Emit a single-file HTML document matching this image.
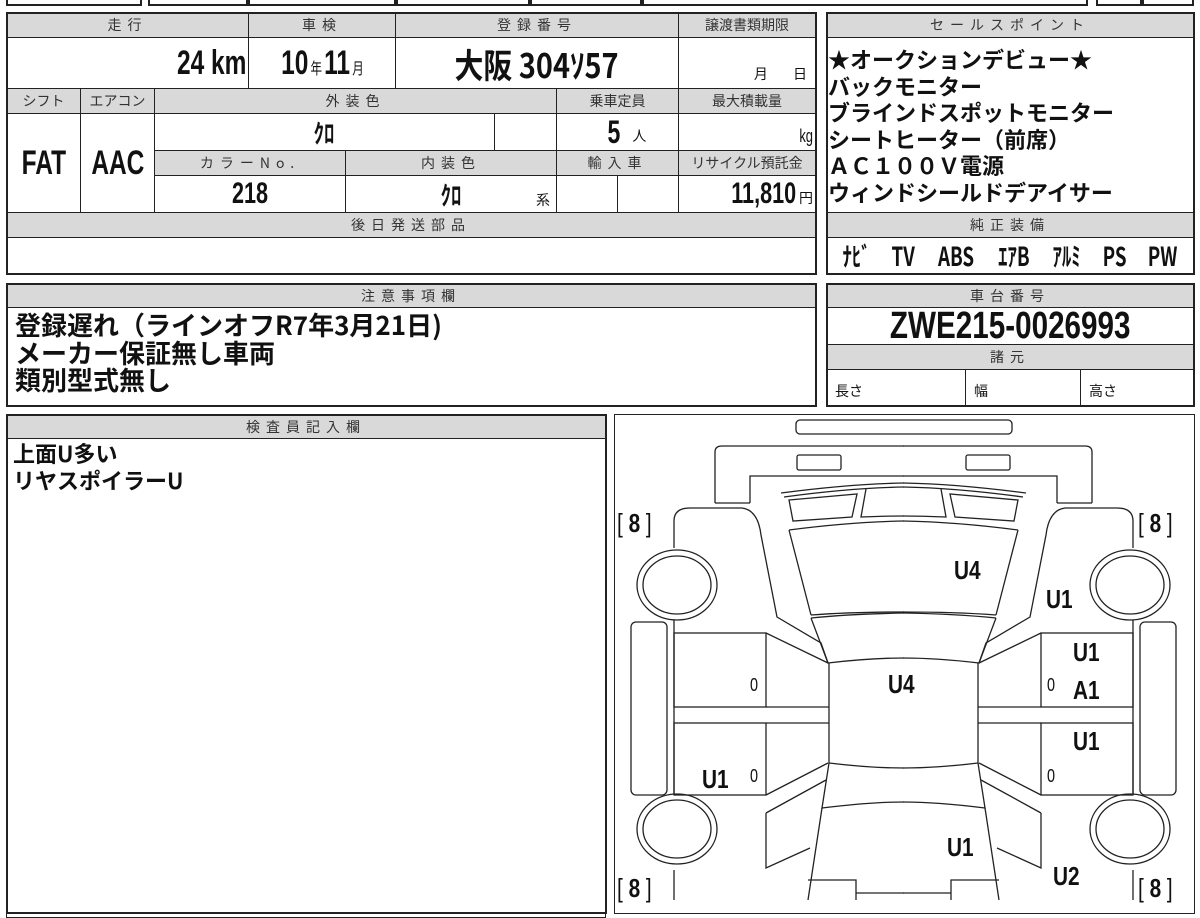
<!DOCTYPE html>
<html><head><meta charset="utf-8"><style>
*{margin:0;padding:0;box-sizing:border-box}
body{width:1200px;height:900px;background:#fff;position:relative;overflow:hidden;font-family:"Liberation Sans","Noto Sans CJK JP",sans-serif;color:#111}
.c{position:absolute;border:1px solid #222;display:flex;align-items:center;justify-content:center;white-space:nowrap}
.h{background:#d9d9d9;font-family:"Noto Sans CJK JP",sans-serif;font-size:14px;letter-spacing:6px;color:#333}
.o{position:absolute;border:2px solid #222}
.b{font-weight:bold}
.t{position:absolute;white-space:nowrap;font-weight:bold;display:inline-block;transform:scaleX(.8);transform-origin:left}
.n{display:inline-block;transform:scaleX(.72);font-weight:bold}
.jp{font-family:"Noto Sans CJK JP",sans-serif}
</style></head><body>
<div class="c" style="left:6px;top:-10px;width:136px;height:16px;border-width:2px"></div>
<div class="c" style="left:148px;top:-10px;width:100px;height:16px;border-width:2px"></div>
<div class="c" style="left:248px;top:-10px;width:148px;height:16px;border-width:2px"></div>
<div class="c" style="left:396px;top:-10px;width:134px;height:16px;border-width:2px"></div>
<div class="c" style="left:530px;top:-10px;width:112px;height:16px;border-width:2px"></div>
<div class="c" style="left:642px;top:-10px;width:446px;height:16px;border-width:2px"></div>
<div class="c" style="left:1096px;top:-10px;width:46px;height:16px;border-width:2px"></div>
<div class="c" style="left:1142px;top:-10px;width:52px;height:16px;border-width:2px"></div>

<div class="c h" style="left:6px;top:12px;width:243px;height:26px">走行</div>
<div class="c h" style="left:248px;top:12px;width:148px;height:26px">車検</div>
<div class="c h" style="left:395px;top:12px;width:284px;height:26px">登録番号</div>
<div class="c h" style="left:678px;top:12px;width:138px;height:26px;letter-spacing:0">譲渡書類期限</div>
<div class="c" style="left:6px;top:37px;width:243px;height:52px;justify-content:flex-end;padding-right:2px"><span class="n" style="font-size:34px;transform-origin:right">24 km</span></div>
<div class="c" style="left:248px;top:37px;width:148px;height:52px"><span class="n" style="font-size:34px">10<span class="jp" style="font-size:16px;font-weight:normal;margin:0 3px">年</span>11<span class="jp" style="font-size:16px;font-weight:normal;margin-left:3px">月</span></span></div>
<div class="c" style="left:395px;top:37px;width:284px;height:52px"><span class="n jp" style="font-size:34px;transform:scaleX(.85)">大阪 304ｿ57</span></div>
<div class="c jp" style="left:678px;top:37px;width:138px;height:52px;font-size:14px;align-items:flex-end;padding-bottom:4px;justify-content:flex-end;padding-right:8px">月&nbsp;&nbsp;&nbsp;&nbsp;&nbsp;&nbsp;&nbsp;&nbsp;日</div>
<div class="c h" style="left:6px;top:88px;width:75px;height:26px;letter-spacing:0">シフト</div>
<div class="c h" style="left:80px;top:88px;width:75px;height:26px;letter-spacing:0">エアコン</div>
<div class="c h" style="left:154px;top:88px;width:403px;height:26px">外装色</div>
<div class="c h" style="left:556px;top:88px;width:123px;height:26px;letter-spacing:0">乗車定員</div>
<div class="c h" style="left:678px;top:88px;width:138px;height:26px;letter-spacing:0">最大積載量</div>
<div class="c" style="left:6px;top:113px;width:75px;height:100px"><span class="n" style="font-size:34px">FAT</span></div>
<div class="c" style="left:80px;top:113px;width:75px;height:100px"><span class="n" style="font-size:34px">AAC</span></div>
<div class="c" style="left:154px;top:113px;width:341px;height:38px"><span class="n jp" style="font-size:26px;transform:scaleX(.8)">ｸﾛ</span></div>
<div class="c" style="left:494px;top:113px;width:63px;height:38px"></div>
<div class="c" style="left:556px;top:113px;width:123px;height:38px;padding-left:16px"><span class="n" style="font-size:32px">5</span><span class="jp" style="font-size:14px;margin:8px 0 0 10px">人</span></div>
<div class="c" style="left:678px;top:113px;width:138px;height:38px;justify-content:flex-end;padding:8px 2px 0 0;font-size:18px"><span class="n" style="font-weight:normal;transform-origin:right">kg</span></div>
<div class="c h" style="left:154px;top:150px;width:192px;height:26px">カラーNo.</div>
<div class="c h" style="left:345px;top:150px;width:212px;height:26px">内装色</div>
<div class="c h" style="left:556px;top:150px;width:123px;height:26px">輸入車</div>
<div class="c h" style="left:678px;top:150px;width:138px;height:26px;letter-spacing:0">リサイクル預託金</div>
<div class="c" style="left:154px;top:175px;width:192px;height:38px"><span class="n" style="font-size:30px">218</span></div>
<div class="c" style="left:345px;top:175px;width:212px;height:38px"><span class="n jp" style="font-size:26px;transform:scaleX(.8)">ｸﾛ</span><span class="jp" style="position:absolute;right:6px;bottom:2px;font-size:14px">系</span></div>
<div class="c" style="left:556px;top:175px;width:62px;height:38px"></div>
<div class="c" style="left:617px;top:175px;width:62px;height:38px"></div>
<div class="c" style="left:678px;top:175px;width:138px;height:38px;justify-content:flex-end;padding-right:2px"><span class="n" style="font-size:30px;transform-origin:right;margin-right:3px">11,810</span><span class="jp" style="font-size:14px;margin-top:8px">円</span></div>
<div class="c h" style="left:6px;top:212px;width:810px;height:26px">後日発送部品</div>
<div class="c" style="left:6px;top:237px;width:810px;height:37px"></div>
<div class="o" style="left:6px;top:12px;width:811px;height:263px"></div>

<div class="c h" style="left:826px;top:12px;width:368px;height:26px">セールスポイント</div>
<div class="c b jp" style="left:826px;top:37px;width:368px;height:176px;display:block;font-size:22px;line-height:26.5px;padding:8px 0 0 1px">★オークションデビュー★<br>バックモニター<br>ブラインドスポットモニター<br>シートヒーター（前席）<br>ＡＣ１００Ｖ電源<br>ウィンドシールドデアイサー</div>
<div class="c h" style="left:826px;top:212px;width:368px;height:26px">純正装備</div>
<div class="c jp" style="left:826px;top:237px;width:368px;height:37px;font-size:26px;justify-content:space-around;padding:0 4px">
<span class="n">ﾅﾋﾞ</span><span class="n">TV</span><span class="n">ABS</span><span class="n">ｴｱB</span><span class="n">ｱﾙﾐ</span><span class="n">PS</span><span class="n">PW</span></div>
<div class="o" style="left:826px;top:12px;width:369px;height:263px"></div>

<div class="c h" style="left:6px;top:283px;width:810px;height:25px">注意事項欄</div>
<div class="c b jp" style="left:6px;top:307px;width:810px;height:99px;display:block;font-size:26px;line-height:27.5px;padding:3px 0 0 8px">登録遅れ（ラインオフR7年3月21日)<br>メーカー保証無し車両<br>類別型式無し</div>
<div class="o" style="left:6px;top:283px;width:811px;height:124px"></div>

<div class="c h" style="left:826px;top:283px;width:368px;height:25px">車台番号</div>
<div class="c" style="left:826px;top:307px;width:368px;height:38px"><span class="n" style="font-size:38px;transform:scaleX(.78)">ZWE215-0026993</span></div>
<div class="c h" style="left:826px;top:344px;width:368px;height:26px">諸元</div>
<div class="c jp" style="left:826px;top:369px;width:140px;height:37px;justify-content:flex-start;padding:6px 0 0 8px;font-size:14px">長さ</div>
<div class="c jp" style="left:965px;top:369px;width:116px;height:37px;justify-content:flex-start;padding:6px 0 0 8px;font-size:14px">幅</div>
<div class="c jp" style="left:1080px;top:369px;width:114px;height:37px;justify-content:flex-start;padding:6px 0 0 8px;font-size:14px">高さ</div>
<div class="o" style="left:826px;top:283px;width:369px;height:124px"></div>

<div class="c h" style="left:6px;top:414px;width:600px;height:25px">検査員記入欄</div>
<div class="c b jp" style="left:6px;top:438px;width:600px;height:480px;display:block;font-size:22px;line-height:27px;padding:1px 0 0 6px">上面U多い<br>リヤスポイラーU</div>
<div class="o" style="left:6px;top:414px;width:601px;height:500px"></div>

<div class="o" style="left:614px;top:414px;width:581px;height:500px;border-width:1px"></div>
<svg style="position:absolute;left:0;top:0" width="1200" height="900" fill="none" stroke="#222" stroke-width="1.3">
<defs>
<g id="half">
<path d="M715 503 V452 Q715 446 722 446 H904 M750 503 V476 H904 M715 503 H750"/>
<rect x="797" y="455" width="44" height="15" rx="2"/>
<path d="M781 493 Q850 484 904 483 M784 497 Q850 488 904 487"/>
<path d="M789 500 L857 494 L852 517 L793 521 Z"/>
<path d="M866 489 L861 517 Q885 516 904 516"/>
<path d="M789 530 Q850 522 904 521 M811 615 Q850 612 904 612 M789 530 L811 615"/>
<path d="M811 618 Q850 614 904 613 M811 618 L828 663 Q870 658 904 658"/>
<path d="M829 663 V763 M829 763 Q870 768 904 768 M829 763 L822 808 Q870 802 904 802"/>
<path d="M822 808 L808 900"/>
<path d="M674 548 V521 Q674 508 690 508 H742 Q758 510 761 535 L777 617 L821 643 L828 663"/>
<path d="M674 620 V795 M674 870 V900"/>
<rect x="674" y="633" width="92" height="74"/>
<rect x="674" y="723" width="92" height="72"/>
<path d="M766 633 L828 663 M766 707 H829 M766 723 H829 M766 795 L828 763"/>
<path d="M766 813 V868 L810 848 M766 813 L826 780"/>
<rect x="631" y="622" width="36" height="173" rx="5"/>
<ellipse cx="677" cy="585" rx="40" ry="35"/><ellipse cx="677" cy="585" rx="34" ry="29"/>
<ellipse cx="677" cy="829" rx="40" ry="35"/><ellipse cx="677" cy="829" rx="34" ry="29"/>
<path d="M808 880 H856 V900 M856 893 H904"/>
</g>
</defs>
<rect x="796" y="420" width="216" height="14" rx="4"/>
<use href="#half"/>
<use href="#half" transform="translate(1807,0) scale(-1,1)"/>
</svg>
<div style="position:absolute;left:0;top:0;font-family:'Liberation Sans',sans-serif;font-size:26px">
<span class="t" style="left:954px;top:555px">U4</span>
<span class="t" style="left:1046px;top:584px">U1</span>
<span class="t" style="left:888px;top:669px">U4</span>
<span class="t" style="left:1073px;top:637px">U1</span>
<span class="t" style="left:1073px;top:675px">A1</span>
<span class="t" style="left:1073px;top:726px">U1</span>
<span class="t" style="left:702px;top:764px">U1</span>
<span class="t" style="left:947px;top:832px">U1</span>
<span class="t" style="left:1053px;top:861px">U2</span>
<span class="t" style="left:617px;top:508px;font-weight:normal">[ <b>8</b> ]</span>
<span class="t" style="left:1138px;top:508px;font-weight:normal">[ <b>8</b> ]</span>
<span class="t" style="left:617px;top:873px;font-weight:normal">[ <b>8</b> ]</span>
<span class="t" style="left:1138px;top:873px;font-weight:normal">[ <b>8</b> ]</span>
<span class="t" style="left:750px;top:675px;font-size:18px;font-weight:normal">0</span>
<span class="t" style="left:1047px;top:675px;font-size:18px;font-weight:normal">0</span>
<span class="t" style="left:750px;top:766px;font-size:18px;font-weight:normal">0</span>
<span class="t" style="left:1047px;top:766px;font-size:18px;font-weight:normal">0</span>
</div>
</body></html>
